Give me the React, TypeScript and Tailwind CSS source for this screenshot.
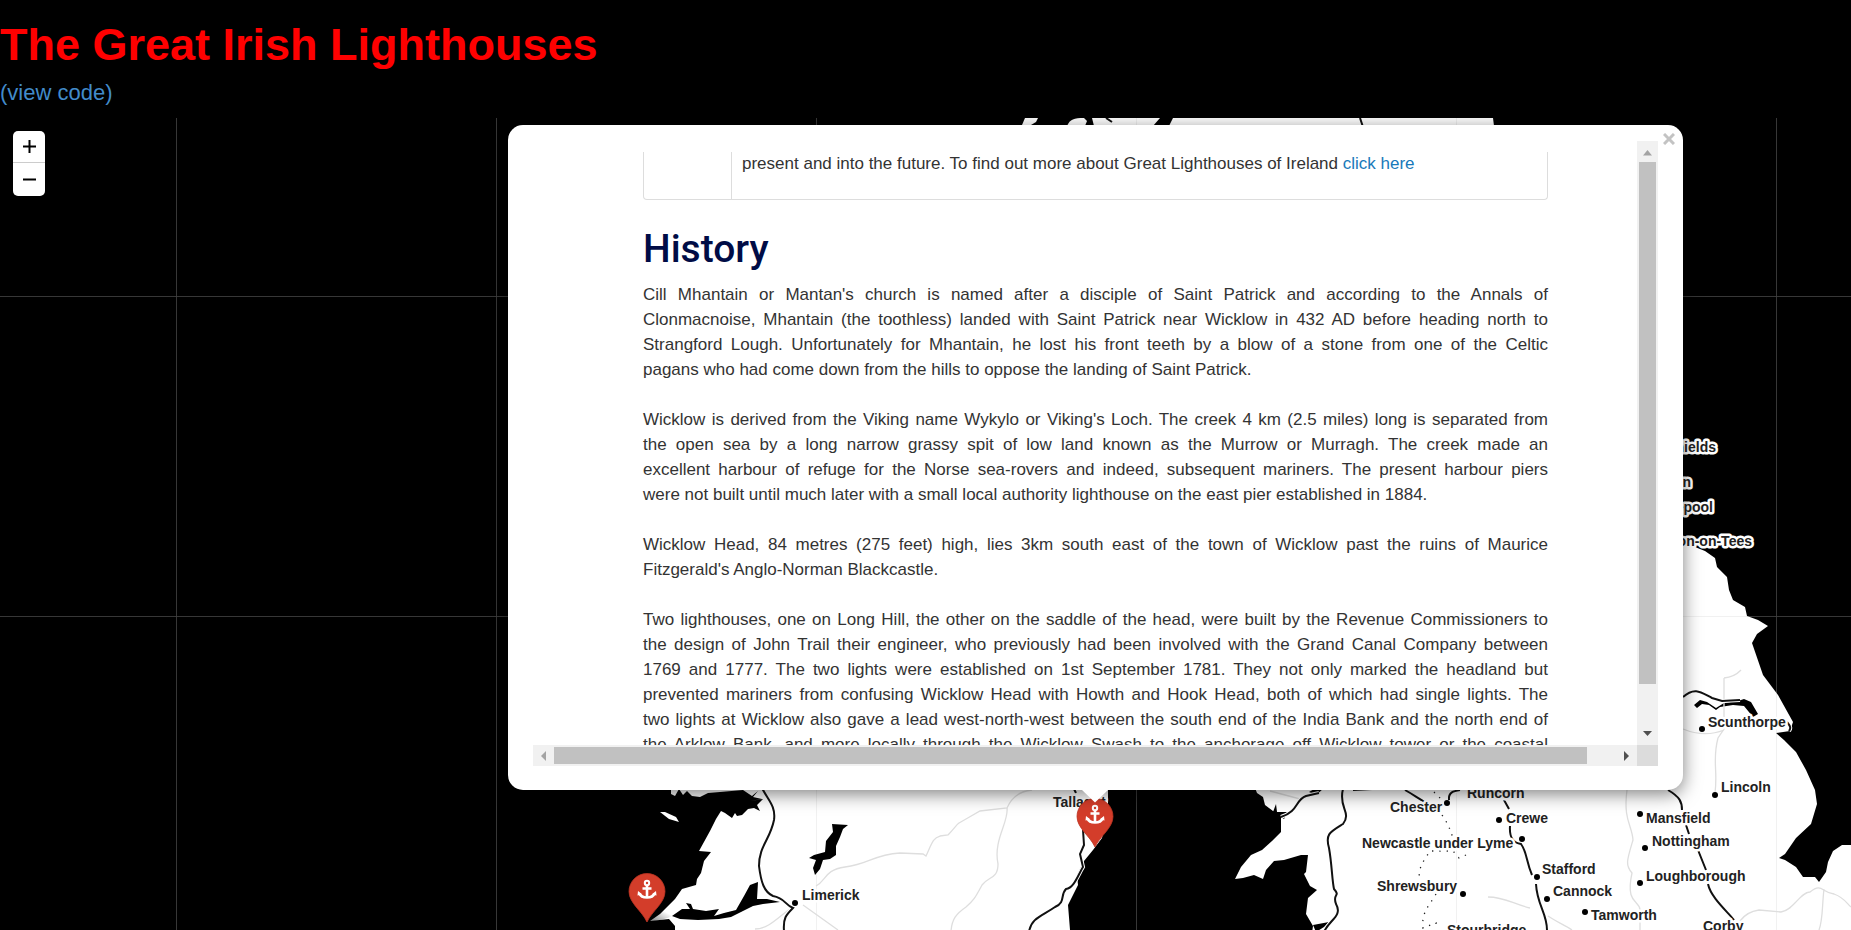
import React from "react";

type Label = { text: string; x: number; y: number; anchor?: "start" | "end"; dot?: [number, number] };

const LABELS: Label[] = [
  { text: "Limerick", x: 802, y: 900, dot: [795, 903] },
  { text: "Tallaght", x: 1053, y: 807 },
  { text: "South Shields", x: 1716, y: 452, anchor: "end" },
  { text: "Darlington", x: 1691, y: 487, anchor: "end" },
  { text: "Hartlepool", x: 1713, y: 512, anchor: "end" },
  { text: "Stockton-on-Tees", x: 1752, y: 546, anchor: "end" },
  { text: "Scunthorpe", x: 1708, y: 727, dot: [1702, 729] },
  { text: "Lincoln", x: 1721, y: 792, dot: [1715, 795] },
  { text: "Mansfield", x: 1646, y: 823, dot: [1640, 814] },
  { text: "Nottingham", x: 1652, y: 846, dot: [1645, 848] },
  { text: "Loughborough", x: 1646, y: 881, dot: [1640, 883] },
  { text: "Corby", x: 1703, y: 931 },
  { text: "Stafford", x: 1542, y: 874, dot: [1537, 877] },
  { text: "Cannock", x: 1553, y: 896, dot: [1547, 899] },
  { text: "Tamworth", x: 1591, y: 920, dot: [1585, 912] },
  { text: "Crewe", x: 1506, y: 823, dot: [1499, 820] },
  { text: "Runcorn", x: 1467, y: 798 },
  { text: "Chester", x: 1390, y: 812, dot: [1447, 803] },
  { text: "Newcastle under Lyme", x: 1362, y: 848, dot: [1522, 839] },
  { text: "Shrewsbury", x: 1377, y: 891, dot: [1463, 894] },
  { text: "Stourbridge", x: 1447, y: 935 },
];

const LAND = [
  // west and centre of Ireland
  "M671 780 L671 794 L675 796 L679 789 L683 795 L687 791 L692 796 L700 797 L708 793 L720 792 L743 790 L752 796 L758 791 L753 797 L762 799 L750 801 L763 799 L757 805 L760 811 L754 808 L748 809 L742 815 L737 816 L735 813 L732 818 L725 813 L721 811 L716 819 L710 831 L699 851 L711 852 L704 861 L701 873 L697 879 L696 885 L682 889 L675 899 L660 914 L650 921 L669 919 L675 926 L675 940 L1066 940 L1070 930 L1068 905 L1078 885 L1077 875 L1084 861 L1093 850 L1102 838 L1108 810 L1108 780 Z",
  "M660 812 L665 812 L676 817 L679 822 L669 819 Z",
  // Scotland
  "M1022 125 L1025 118 L1038 118 L1036 122 L1031 125 Z",
  "M1067 126 C1070 119 1074 118 1084 118 L1087 121 L1085 126 Z",
  "M1094 126 L1092 118 L1160 118 L1153 126 Z",
  "M1169 126 L1173 118 L1493 118 L1494 126 Z",
  // Wales and England
  "M1252 780 L1257 793 L1263 797 L1265 805 L1273 811 L1281 815 L1281 832 L1272 841 L1262 850 L1251 855 L1241 867 L1235 879 L1243 878 L1254 875 L1263 879 L1266 870 L1274 861 L1284 860 L1301 855 L1308 855 L1306 872 L1304 874 L1310 886 L1317 890 L1308 898 L1306 914 L1313 926 L1311 940 L1851 940 L1851 845 L1842 845 L1833 851 L1828 862 L1826 872 L1819 882 L1815 877 L1803 877 L1796 867 L1785 860 L1779 858 L1785 854 L1796 838 L1811 824 L1817 804 L1815 790 L1806 770 L1796 752 L1784 740 L1776 733 L1790 731 L1793 722 L1778 695 L1763 675 L1752 643 L1757 634 L1768 626 L1758 620 L1747 616 L1745 607 L1733 600 L1729 590 L1727 577 L1717 567 L1715 558 L1705 551 L1690 545 L1676 545 L1676 780 Z",
];

const WATER = [
  "M832 824 L848 825 L843 829 L840 837 L836 846 L836 855 L830 859 L823 860 L820 869 L815 875 L813 868 L816 860 L809 858 L814 855 L825 852 L826 841 L833 832 Z",
  "M672 916 L682 909 L690 909 L686 903 L691 904 L693 909 L706 911 L719 909 L714 916 L724 913 L736 910 L744 896 L750 885 L758 882 L757 899 L767 899 L780 902 L763 904 L753 906 L743 911 L731 917 L719 919 L698 920 L680 919 Z",
  "M1694 705 L1700 700 L1707 702 L1716 708 L1724 703 L1738 701 L1744 699 L1751 702 L1758 714 L1753 717 L1744 706 L1733 705 L1720 707 L1716 710 L1709 705 L1702 704 L1697 708 Z",
  "M1309 792 L1316 788 L1323 789 L1316 795 Z",
  "M1273 812 L1276 804 L1277 812 L1288 812 L1284 819 Z",
  "M1313 925 L1329 922 L1324 927 L1316 932 Z",
];

const ROADS = [
  "M762 788 C768 800 776 806 774 820 C770 840 759 846 759 866 C761 882 764 892 773 896 C785 898 785 905 793 908 C786 915 783 918 784 931",
  "M1083 830 L1084 845 L1080 854 L1083 867 C1078 875 1074 888 1066 889 C1060 895 1066 902 1055 907 C1042 916 1031 918 1029 932",
  "M1343 789 C1338 808 1352 812 1343 824 C1330 832 1325 834 1329 848 C1332 865 1332 880 1334 889 C1341 897 1332 893 1336 904 C1343 916 1329 920 1324 932",
  "M1281 817 C1299 811 1295 800 1306 796 L1319 793",
  "M1353 790 L1372 789 M1405 790 C1414 795 1419 799 1425 802",
  "M1449 800 C1448 792 1454 791 1460 790 M1504 800 L1509 809",
  "M1510 826 C1509 840 1515 843 1521 844 C1527 852 1526 861 1532 875 M1536 884 C1537 905 1547 913 1547 930",
  "M1668 790 C1680 797 1682 802 1682 810 M1686 825 L1689 834 M1698 850 L1706 870 M1708 884 C1711 898 1728 912 1734 920",
  "M1683 697 C1695 686 1702 693 1712 698 L1722 701 L1740 700",
  "M1073 787 L1076 793 M1787 722 C1792 728 1790 729 1789 731",
];

const MINOR_ROADS = [
  "M755 929 C770 929 781 914 793 907 M803 905 L838 930",
  "M816 886 C827 880 824 870 845 867 C870 864 872 855 900 853 L923 854 L926 856 C932 843 933 838 940 836 L948 835 C960 822 955 825 966 819 L980 811 L1007 808 C1012 797 1020 791 1032 790",
  "M1007 808 C1009 822 993 840 998 864 C998 879 989 876 982 885 C975 898 974 900 966 907 C956 914 952 919 951 931",
  "M1627 790 C1623 820 1632 825 1633 840 C1627 860 1625 865 1632 873 C1625 905 1640 900 1640 910 L1640 930",
  "M1724 678 L1724 729 L1718 738 C1712 760 1718 770 1715 793 M1683 729 C1700 736 1714 734 1724 730 M1724 678 C1735 677 1740 671 1741 670",
  "M1740 921 C1745 914 1752 911 1759 910 L1781 912 C1794 910 1800 892 1810 892 C1822 882 1822 893 1834 894 C1845 898 1847 904 1851 907 M1824 889 C1822 905 1823 920 1819 930",
  "M1488 897 C1505 897 1513 904 1530 908 M1548 916 C1557 922 1566 926 1572 930 M1270 791 L1300 799",
];

const BORDERS = [
  "M1434 792 L1441 799 M1442 815 C1449 825 1450 830 1453 838 M1466 855 L1459 858 L1453 851 L1430 851 L1423 862 C1419 870 1418 875 1421 884 M1436 894 C1430 905 1421 912 1423 928 L1436 923 L1436 931",
];

const GRID = "M176.5 118V930M496.5 118V930M816.5 118V930M1136.5 118V930M1456.5 118V930M1776.5 118V930M0 296.5H1851M0 616.5H1851";

function BaseMap() {
  return (
    <svg className="absolute inset-0 h-full w-full" viewBox="0 118 1851 812" preserveAspectRatio="xMidYMid slice" aria-label="Map of Ireland and Britain">
      <path d={GRID} stroke="#2c2c2c" strokeWidth="1" />
      <g fill="#fff">{LAND.map((d) => <path key={d} d={d} />)}</g>
      <path d={GRID} stroke="#888" strokeOpacity="0.12" strokeWidth="1" />
      <g fill="#000">{WATER.map((d) => <path key={d} d={d} />)}</g>
      <g fill="none" stroke="#dedede" strokeWidth="1.3">{MINOR_ROADS.map((d) => <path key={d} d={d} />)}</g>
      <g fill="none" stroke="#222" strokeWidth="1.3" strokeDasharray="1.3 6">{BORDERS.map((d) => <path key={d} d={d} />)}</g>
      <g fill="none" stroke="#fff" strokeWidth="4">{ROADS.map((d) => <path key={d} d={d} />)}</g>
      <g fill="none" stroke="#111" strokeWidth="2">{ROADS.map((d) => <path key={d} d={d} />)}</g>
      <path d="M1360 118 L1363 127 M1106 118 L1112 122" stroke="#111" strokeWidth="2" />
      <g fontFamily="'Liberation Sans', Arial, sans-serif" fontWeight="700" fontSize="14" fill="#222" stroke="#fff" strokeWidth="5" strokeLinejoin="round" paintOrder="stroke">
        {LABELS.map((l) => (
          <text key={l.text} x={l.x} y={l.y} textAnchor={l.anchor ?? "start"}>{l.text}</text>
        ))}
      </g>
      <g fill="#000">
        {LABELS.map((l) => l.dot && <circle key={l.text} cx={l.dot[0]} cy={l.dot[1]} r="3" />)}
      </g>
    </svg>
  );
}

function Marker({ className, label }: { className: string; label: string }) {
  return (
    <button type="button" aria-label={label} className={`absolute ${className}`}>
      <svg width="70" height="52" viewBox="0 0 70 52">
        <defs>
          <linearGradient id="pinShadow" x1="0" y1="1" x2="1" y2="0">
            <stop offset="0" stopColor="#000" stopOpacity="0.55" />
            <stop offset="0.6" stopColor="#000" stopOpacity="0" />
          </linearGradient>
        </defs>
        <path d="M19 49 L36 33 Q52 30 50 38 Q46 46 19 49Z" fill="url(#pinShadow)" />
        <path d="M19 49 C14 38 1 30 1 18.500 A18 18 0 0 1 37 18.500 C37 30 24 38 19 49Z" fill="#d33d2a" stroke="#bb3322" strokeWidth="0.8" />
        <g fill="none" stroke="#fff" strokeWidth="2.600">
          <circle cx="19" cy="10" r="2.200" strokeWidth="2" />
          <path d="M19 12.500V24M14.500 15.500H23.500" />
          <path d="M11.500 20.500Q13 24.500 19 24.500T26.500 20.500" />
        </g>
        <path d="M9.500 22.500L10 18L14.500 21.500ZM28.500 22.500L28 18L23.500 21.500Z" fill="#fff" />
      </svg>
    </button>
  );
}

const HISTORY: string[][] = [
  [
    "Cill Mhantain or Mantan's church is named after a disciple of Saint Patrick and according to the Annals of",
    "Clonmacnoise, Mhantain (the toothless) landed with Saint Patrick near Wicklow in 432 AD before heading north to",
    "Strangford Lough. Unfortunately for Mhantain, he lost his front teeth by a blow of a stone from one of the Celtic",
    "pagans who had come down from the hills to oppose the landing of Saint Patrick.",
  ],
  [
    "Wicklow is derived from the Viking name Wykylo or Viking's Loch. The creek 4 km (2.5 miles) long is separated from",
    "the open sea by a long narrow grassy spit of low land known as the Murrow or Murragh. The creek made an",
    "excellent harbour of refuge for the Norse sea-rovers and indeed, subsequent mariners. The present harbour piers",
    "were not built until much later with a small local authority lighthouse on the east pier established in 1884.",
  ],
  [
    "Wicklow Head, 84 metres (275 feet) high, lies 3km south east of the town of Wicklow past the ruins of Maurice",
    "Fitzgerald's Anglo-Norman Blackcastle.",
  ],
  [
    "Two lighthouses, one on Long Hill, the other on the saddle of the head, were built by the Revenue Commissioners to",
    "the design of John Trail their engineer, who previously had been involved with the Grand Canal Company between",
    "1769 and 1777. The two lights were established on 1st September 1781. They not only marked the headland but",
    "prevented mariners from confusing Wicklow Head with Howth and Hook Head, both of which had single lights. The",
    "two lights at Wicklow also gave a lead west-north-west between the south end of the India Bank and the north end of",
    "the Arklow Bank, and more locally through the Wicklow Swash to the anchorage off Wicklow tower or the coastal",
  ],
];

function Arrow({ d, fill }: { d: string; fill: string }) {
  return (
    <svg width="21" height="21" viewBox="0 0 21 21" className="shrink-0" aria-hidden="true">
      <path d={d} fill={fill} />
    </svg>
  );
}

function Popup() {
  return (
    <section aria-label="Wicklow Head" className="absolute top-[7px] left-[508px] w-[1175px] rounded-[15px] bg-white px-[25px] pt-4 pb-6 shadow-[0_4px_18px_rgba(0,0,0,0.5)]">
      <button type="button" aria-label="Close" className="absolute top-1 right-1 flex size-5 items-center justify-center">
        <svg width="12" height="12" viewBox="0 0 12 12" stroke="#c3c3c3" strokeWidth="3">
          <path d="M1 1L11 11M11 1L1 11" />
        </svg>
      </button>
      <div className="grid grid-cols-[1fr_21px] grid-rows-[604px_21px]">
        <div className="overflow-hidden pt-[11px] pr-[89px] pl-[110px] text-[17px] leading-[25px] text-[#333]">
          <div className="flex h-12 rounded-b-sm border border-t-0 border-[#ddd]">
            <div className="w-[88px] border-r border-[#ddd]" />
            <p className="pl-2.5 leading-[23px]">
              present and into the future. To find out more about Great Lighthouses of Ireland{" "}
              <a href="#lighthouses" className="text-[#1779ba]">click here</a>
            </p>
          </div>
          <h2 className="mt-6 mb-2 font-['Roboto',sans-serif] text-[39px] leading-[50px] font-medium text-[#000c46]">History</h2>
          <div className="flex flex-col gap-[25px]">
            {HISTORY.map((lines, p) => (
              <p key={lines[0]}>
                {lines.map((line, i) => (
                  <span key={line} className={i < lines.length - 1 || p === HISTORY.length - 1 ? "block whitespace-nowrap [text-align-last:justify]" : "block"}>
                    {line}{" "}
                  </span>
                ))}
              </p>
            ))}
          </div>
        </div>
        <div className="flex flex-col items-center bg-[#f1f1f1]">
          <Arrow d="M6 14.500L10.500 9L15 14.500Z" fill="#a3a3a3" />
          <div className="h-[522px] w-[17px] bg-[#c1c1c1]" />
          <div className="flex-1" />
          <Arrow d="M6 7L15 7L10.500 12Z" fill="#505050" />
        </div>
        <div className="flex items-center bg-[#f1f1f1]">
          <Arrow d="M13 6L8 11L13 16Z" fill="#a3a3a3" />
          <div className="h-[17px] w-[1033px] bg-[#c1c1c1]" />
          <div className="flex-1" />
          <Arrow d="M8 6L13 11L8 16Z" fill="#505050" />
        </div>
        <div className="bg-[#dcdcdc]" />
      </div>
      <svg width="26" height="13" viewBox="0 0 26 13" className="absolute top-full left-[574px]" aria-hidden="true">
        <path d="M0 0H26L13 12.500Z" fill="#fff" />
      </svg>
    </section>
  );
}

export default function App() {
  return (
    <div className="flex min-h-screen flex-col overflow-hidden bg-black font-['Liberation_Sans',Arial,sans-serif]">
      <header className="flex h-[118px] flex-col pt-5">
        <h1 className="text-[45px] leading-[50px] font-bold text-[#f00]">The Great Irish Lighthouses</h1>
        <a href="#code" className="mt-2.5 self-start text-[22px] leading-[26px] text-[#428bca]">(view code)</a>
      </header>
      <main className="relative flex-1 overflow-hidden">
        <BaseMap />
        <div className="absolute top-[13px] left-[13px] flex w-8 flex-col overflow-hidden rounded-[5px] bg-white">
          <button type="button" aria-label="Zoom in" className="flex h-8 items-center justify-center border-b border-[#ccc]">
            <svg width="13" height="13" viewBox="0 0 13 13" stroke="#000" strokeWidth="2"><path d="M0 6.500H13M6.500 0V13" /></svg>
          </button>
          <button type="button" aria-label="Zoom out" className="flex h-[33px] items-center justify-center">
            <svg width="13" height="13" viewBox="0 0 13 13" stroke="#000" strokeWidth="2"><path d="M0 6.500H13" /></svg>
          </button>
        </div>
        <Marker className="top-[755px] left-[628px]" label="Loop Head" />
        <Marker className="top-[680px] left-[1076px]" label="Wicklow Head" />
        <Popup />
      </main>
    </div>
  );
}
